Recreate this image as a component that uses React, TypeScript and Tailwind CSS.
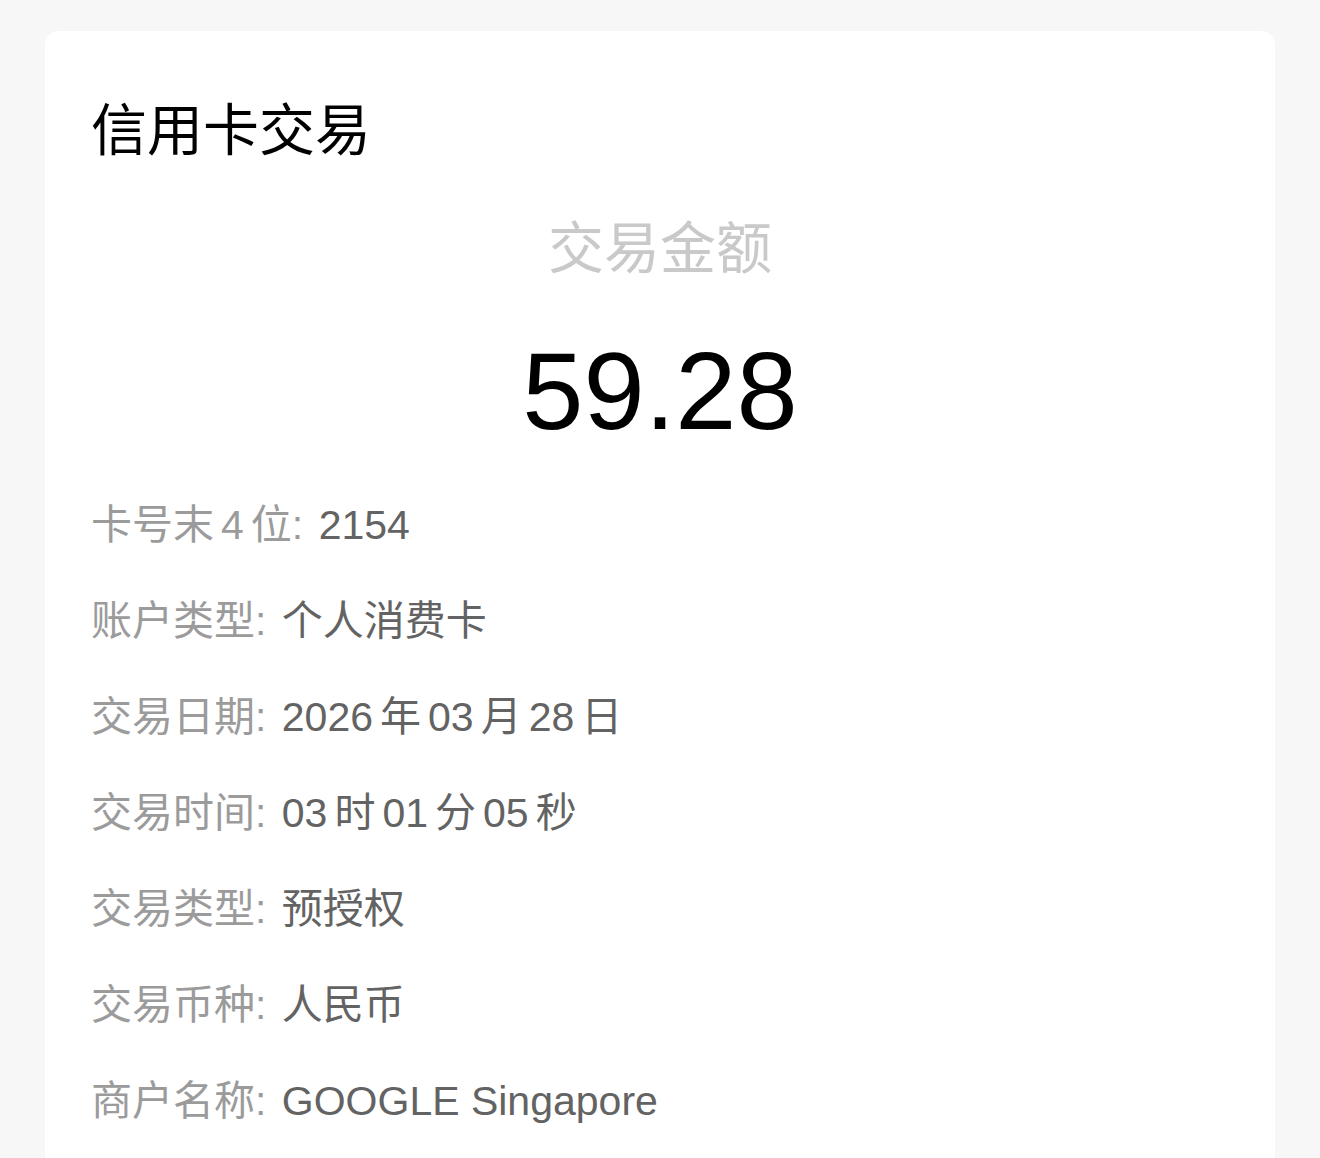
import clsx from 'clsx'

const font = {
    fontFamily: '"Liberation Sans", "Noto Sans CJK SC", sans-serif',
}

const rows: { label: string; value: string }[] = [
    { label: '卡号末4位', value: '2154' },
    { label: '账户类型', value: '个人消费卡' },
    { label: '交易日期', value: '2026年03月28日' },
    { label: '交易时间', value: '03时01分05秒' },
    { label: '交易类型', value: '预授权' },
    { label: '交易币种', value: '人民币' },
    { label: '商户名称', value: 'GOOGLE Singapore' },
]

// iOS puts a small gap between CJK and Latin runs
const Spaced = ({ text }: { text: string }) => {
    const parts = text.split(/([0-9A-Za-z ]+)/).filter(Boolean)
    return (
        <>
            {parts.map((p, i) => {
                const latin = /[0-9A-Za-z]/.test(p)
                return (
                    <span
                        key={i}
                        className={clsx(
                            latin && i > 0 && 'ml-[7px]',
                            latin && i < parts.length - 1 && 'mr-[7px]',
                        )}
                    >
                        {p}
                    </span>
                )
            })}
        </>
    )
}

const InfoRow = ({ label, value }: { label: string; value: string }) => (
    <div className="h-[96px] flex items-center text-[41px] leading-[48px] whitespace-pre">
        <span className="text-[#9b9b9b]">
            <Spaced text={label} />:
        </span>
        <span className="text-[#636363] ml-[4px]">
            {' '}
            <Spaced text={value} />
        </span>
    </div>
)

const App = () => {
    return (
        <div
            className="min-h-[1158px] bg-[#f7f7f7] px-[45px] pt-[31px]"
            style={font}
        >
            <div className="bg-white rounded-[14px] px-[46px] pt-[68px] pb-[40px]">
                <h1 className="text-[56px] leading-[64px] text-black font-normal">
                    信用卡交易
                </h1>
                <div className="mt-[54px] text-center text-[56px] leading-[64px] text-[#c9c9c9]">
                    交易金额
                </div>
                <div className="mt-[50px] text-center text-[110px] leading-[120px] text-black">
                    59.28
                </div>
                <div className="mt-[26px]">
                    {rows.map((r) => (
                        <InfoRow key={r.label} label={r.label} value={r.value} />
                    ))}
                </div>
            </div>
        </div>
    )
}

export default App
